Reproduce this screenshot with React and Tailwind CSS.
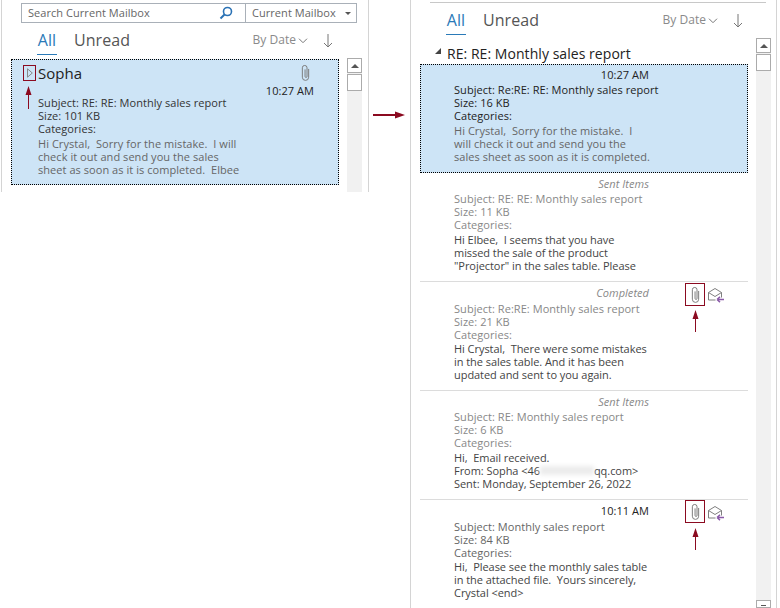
import React from 'react';

const Clip = ({ className = '' }) => (
  <svg viewBox="0 0 12 20" fill="none" stroke="#7b7b7b" strokeWidth="1.1" className={className}>
    <path d="M9.5 5.5v9.2a3.5 3.5 0 0 1-7 0V4.2a2.6 2.6 0 0 1 5.2 0v9.6a1.1 1.1 0 0 1-2.2 0V6" />
  </svg>
);

const OpenMail = () => (
  <svg viewBox="0 0 18 16" fill="none" className="w-[18px] h-[16px]">
    <path d="M1.5 5.5 8 1.5l6.5 4v5" stroke="#7f7f7f" />
    <path d="M1.5 5.5v7.5h7M1.5 5.5 8 9.5l6.5-4" stroke="#7f7f7f" />
    <path d="M10 12.5h7M10 12.5l3-2.6M10 12.5l3 2.6" stroke="#8a5aa8" strokeWidth="1.5" />
  </svg>
);

const RedArrow = ({ h = 23 }) => (
  <svg width="7" height={h} viewBox={`0 0 7 ${h}`} className="block">
    <path d={`M3.5 0 6.5 9H4v${h - 9}H3V9H.5z`} fill="#8b0a20" />
  </svg>
);

const Tabs = () => (
  <div className="flex items-start h-[31px]">
    <div className="w-[20px] border-b-[1px] border-[#2a7ab8] h-[27px] flex justify-center text-[#2a7ab8] text-[16px] leading-[24px]">All</div>
    <div className="ml-[17px] text-[16px] leading-[24px] text-[#555]">Unread</div>
    <div className="ml-auto flex items-center text-[12px] leading-[24px] text-[#8a8a8a]">
      By Date
      <svg width="10" height="6" viewBox="0 0 10 6" fill="none" stroke="#777" className="ml-[2px] mt-[1px]"><path d="M1 .7 5 4.7 9 .7" /></svg>
    </div>
    <svg width="10" height="14" viewBox="0 0 10 14" fill="none" stroke="#777" className="ml-[15px] mt-[6px] mr-[2px]"><path d="M5 0v13M1 9l4 4 4-4" /></svg>
  </div>
);

const Scrollbar = () => (
  <div className="w-[15px] h-full bg-[#f1f1f1] flex flex-col items-stretch">
    <div className="h-[15px] border border-[#ababab] bg-white flex items-center justify-center">
      <div className="w-0 h-0 border-x-[4px] border-x-transparent border-b-[4px] border-b-[#555]" />
    </div>
    <div className="h-[17px] mt-[1px] border border-[#ababab] bg-white" />
  </div>
);

const Lines = ({ lines, className = '' }) => (
  <div className={className}>
    {lines.map((l, i) => (
      <div key={i} className="h-[13px] leading-[13px] whitespace-pre">{l}</div>
    ))}
  </div>
);

const Email = ({ head, headClass, meta, metaClass, body, flagged, sep, boxClass = 'top-[1px]' }) => (
  <div className={`relative h-[109px] pt-[4px] ${sep ? 'border-b border-[#dcdcdc]' : ''}`}>
    <div className={`w-[229px] text-right h-[13px] leading-[13px] ${headClass}`}>{head}</div>
    <Lines lines={meta} className={`pl-[34px] ${flagged ? 'mt-[3px]' : 'mt-[2px]'} ${metaClass}`} />
    <Lines lines={body} className={`pl-[34px] text-[#444] tracking-[-0.05px] ${flagged ? 'mt-[1px]' : 'mt-[2px]'}`} />
    {flagged && (
      <>
        <div className={`absolute left-[265px] w-[20px] h-[23px] border border-[#8b0a20] flex items-center justify-center ${boxClass}`}>
          <Clip className="w-[11px] h-[18px]" />
        </div>
        <div className="absolute left-[287px] top-[5px]"><OpenMail /></div>
        <div className="absolute left-[272px] top-[28px]"><RedArrow h={22} /></div>
      </>
    )}
  </div>
);

export default function App() {
  return (
    <div className="w-[780px] h-[608px] overflow-hidden bg-white flex text-[11px] tracking-[0.05px] text-[#333]" style={{ fontFamily: '"Open Sans", "Noto Sans", sans-serif' }}>
      {/* left pane */}
      <div className="ml-px w-[368px] h-[192px] border-x border-[#d4d4d4] shrink-0 pt-[3px] pl-[19px] flex flex-col">
        <div className="w-[336px] h-[20px] border border-[#a9b0b8] flex items-center text-[#666]">
          <div className="w-[224px] h-full flex items-center pl-[6px] border-r border-[#a9b0b8]">
            Search Current Mailbox
            <svg width="14" height="14" viewBox="0 0 14 14" fill="none" className="ml-auto mr-[12px]">
              <circle cx="8.5" cy="5.5" r="4" stroke="#2a72b5" strokeWidth="1.6" />
              <path d="M5.5 8.5 1.5 12.5" stroke="#2a72b5" strokeWidth="2" />
            </svg>
          </div>
          <div className="pl-[6px] flex-1 flex items-center">
            Current Mailbox
            <div className="ml-auto mr-[5px] w-0 h-0 border-x-[3px] border-x-transparent border-t-[3px] border-t-[#555]" />
          </div>
        </div>
        <div className="ml-[16px] w-[298px] mt-[5px]"><Tabs /></div>
        <div className="flex flex-1 min-h-0 -ml-[10px]">
          <div className="relative w-[328px] h-[126px] border border-dotted border-black bg-[#cde4f6] pl-[26px] pt-[1px] text-[#333]">
            <div className="text-[15px] leading-[24px] text-[#222]">Sopha</div>
            <div className="absolute left-[11px] top-[5px] w-[13px] h-[16px] border border-[#8b0a20] flex items-center justify-center">
              <svg width="6" height="10" viewBox="0 0 6 10" fill="none" stroke="#888"><path d="M.5 .8 5.3 5 .5 9.2z" /></svg>
            </div>
            <div className="absolute left-[13px] top-[26px]"><RedArrow h={23} /></div>
            <Clip className="absolute left-[288px] top-[4px] w-[11px] h-[18px]" />
            <div className="absolute right-[24px] top-[24px] text-[#222] leading-[13px]">10:27 AM</div>
            <Lines className="mt-[11px]" lines={['Subject: RE: RE: Monthly sales report', 'Size: 101 KB', 'Categories:']} />
            <Lines className="mt-[2px] text-[#666]" lines={['Hi Crystal,  Sorry for the mistake.  I will', 'check it out and send you the sales', 'sheet as soon as it is completed.  Elbee']} />
          </div>
          <div className="ml-[8px] -mt-px h-[134px]"><Scrollbar /></div>
        </div>
      </div>

      {/* arrow between panes */}
      <div className="w-[41px] shrink-0 pl-[4px] pt-[111px]">
        <svg width="32" height="8" viewBox="0 0 32 8"><path d="M0 3h22V.5L32 4 22 7.5V5H0z" fill="#8b0a20" /></svg>
      </div>

      {/* right pane */}
      <div className="w-[367px] h-full border-x border-[#d4d4d4] shrink-0 pl-[9px] pt-[2px] flex flex-col">
        <div className="ml-[10px] w-[336px] border-t border-[#c8c8c8]" />
        <div className="ml-[26px] w-[299px] mt-[5px]"><Tabs /></div>
        <div className="flex flex-1 min-h-0">
          <div className="w-[328px] shrink-0">
            <div className="relative h-[21px] pl-[27px] mt-[4px] text-[14px] leading-[22px] text-[#222] whitespace-nowrap">
              <div className="absolute left-[15px] top-[5px] w-0 h-0 border-l-[6px] border-l-transparent border-b-[6px] border-b-[#444]" />
              RE: RE: Monthly sales report
            </div>
            <div className="h-[109px] border border-dotted border-black bg-[#cde4f6]">
              <div className="w-[228px] text-right h-[13px] leading-[13px] mt-[3px] text-[#222]">10:27 AM</div>
              <Lines className="pl-[33px] mt-[2px] text-[#222]" lines={['Subject: Re:RE: RE: Monthly sales report', 'Size: 16 KB', 'Categories:']} />
              <Lines className="pl-[33px] mt-[2px] text-[#666]" lines={['Hi Crystal,  Sorry for the mistake.  I', 'will check it out and send you the', 'sales sheet as soon as it is completed.']} />
            </div>
            <Email sep head="Sent Items" headClass="italic text-[#888]" metaClass="text-[#888]"
              meta={['Subject: RE: RE: Monthly sales report', 'Size: 11 KB', 'Categories:']}
              body={['Hi Elbee,  I seems that you have', 'missed the sale of the product', '"Projector" in the sales table. Please']} />
            <Email sep flagged head="Completed" headClass="italic text-[#888]" metaClass="text-[#888]"
              meta={['Subject: Re:RE: Monthly sales report', 'Size: 21 KB', 'Categories:']}
              body={['Hi Crystal,  There were some mistakes', 'in the sales table. And it has been', 'updated and sent to you again.']} />
            <Email sep head="Sent Items" headClass="italic text-[#888]" metaClass="text-[#888]"
              meta={['Subject: RE: Monthly sales report', 'Size: 6 KB', 'Categories:']}
              body={['Hi,  Email received.', <>From: Sopha &lt;46<span className="inline-block w-[54px] h-[9px] bg-[#ececec] blur-[2px]" />qq.com&gt;</>, 'Sent: Monday, September 26, 2022']} />
            <Email flagged boxClass="top-0" head="10:11 AM" headClass="text-[#222]" metaClass="text-[#666]"
              meta={['Subject: Monthly sales report', 'Size: 84 KB', 'Categories:']}
              body={['Hi,  Please see the monthly sales table', 'in the attached file.  Yours sincerely,', 'Crystal <end>']} />
          </div>
          <div className="ml-[8px] relative -mt-px">
            <Scrollbar />
            <div className="absolute left-0 bottom-0 w-[15px] h-[8px] border border-[#ababab] bg-white flex justify-center pt-[4px]">
              <div className="w-[5px] h-px bg-[#555]" />
            </div>
          </div>
        </div>
      </div>
    </div>
  );
}
